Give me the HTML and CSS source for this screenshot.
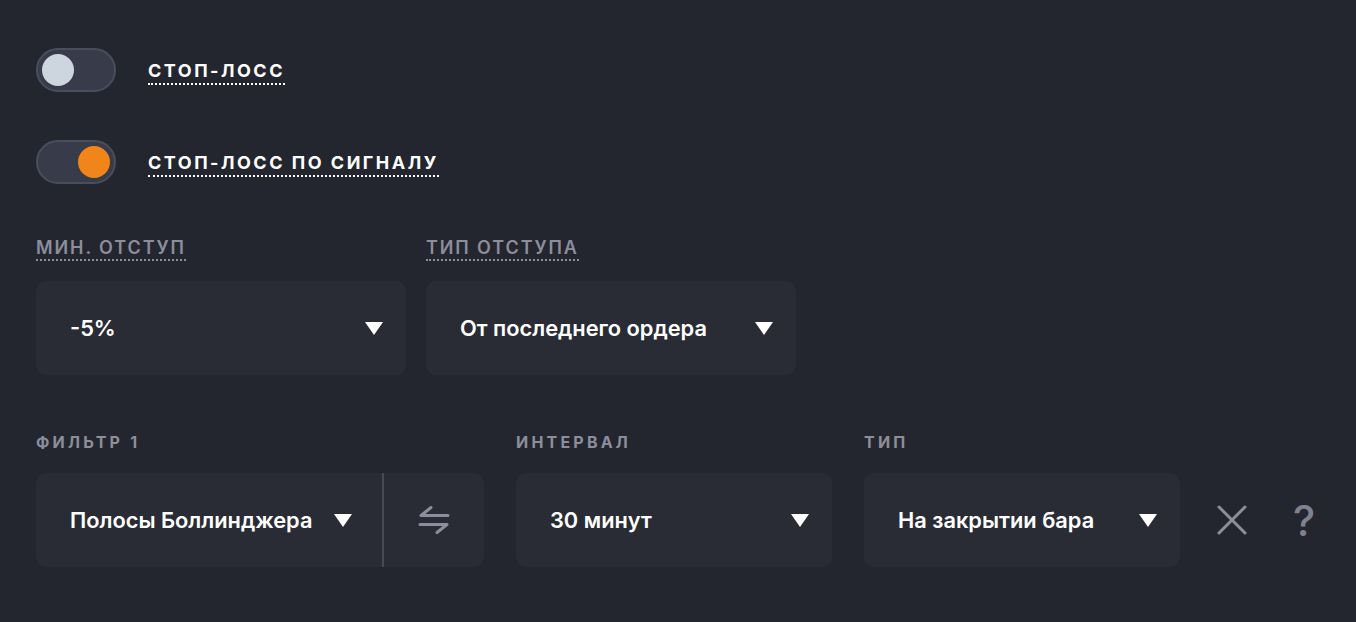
FILE: index.html
```html
<!DOCTYPE html>
<html lang="ru">
<head>
  <meta charset="UTF-8" />
  <meta name="viewport" content="width=device-width, initial-scale=1" />
  <title>Стоп-лосс</title>
  <link rel="stylesheet" href="styles.css">
</head>
<body>
<div id="settings">
  <div class="switch-row">
    <span class="switch"><span class="knob"></span></span>
    <span class="switch-label">Стоп-лосс</span>
  </div>
  <div class="switch-row">
    <span class="switch on"><span class="knob"></span></span>
    <span class="switch-label">Стоп-лосс по сигналу</span>
  </div>

  <div class="fields offset">
    <div class="field">
      <span class="field-label hint">Мин. отступ</span>
      <div class="select"><span>-5%</span><i class="caret"></i></div>
    </div>
    <div class="field">
      <span class="field-label hint">Тип отступа</span>
      <div class="select"><span>От последнего ордера</span><i class="caret"></i></div>
    </div>
  </div>

  <div class="fields filter">
    <div class="field">
      <span class="field-label">Фильтр 1</span>
      <div class="select split">
        <div class="select-main"><span>Полосы Боллинджера</span><i class="caret"></i></div>
        <button class="swap">
          <svg width="32" height="32" viewBox="0 0 32 32" fill="none" stroke="currentColor" stroke-width="3" stroke-linecap="round" stroke-linejoin="round">
            <path d="M3 11.5h27M3 11.5l10-8"/>
            <path d="M2 20.5h27M29 20.5l-10 8"/>
          </svg>
        </button>
      </div>
    </div>
    <div class="field">
      <span class="field-label">Интервал</span>
      <div class="select"><span>30 минут</span><i class="caret"></i></div>
    </div>
    <div class="field">
      <span class="field-label">Тип</span>
      <div class="select"><span>На закрытии бара</span><i class="caret"></i></div>
    </div>
    <div class="actions">
      <button class="icon-btn">
        <svg width="30" height="30" viewBox="0 0 30 30" fill="none" stroke="currentColor" stroke-width="3" stroke-linecap="round">
          <path d="M2 2l26 26M28 2L2 28"/>
        </svg>
      </button>
      <button class="icon-btn help">?</button>
    </div>
  </div>
</div>
</body>
</html>
```

FILE: styles.css
```css
* { margin: 0; padding: 0; box-sizing: border-box; }
html, body {
  height: 100%; overflow: hidden;
  font-family: Inter, 'Liberation Sans', sans-serif;
  background: #24262f; color: #fff;
}

#settings {
  padding: 48px 36px;
  display: flex;
  flex-direction: column;
}

/* toggles */
.switch-row {
  display: flex;
  align-items: center;
  gap: 32px;
  height: 44px;
  margin-bottom: 48px;
}

.switch {
  width: 80px; height: 44px;
  border-radius: 22px;
  background: #383b4a;
  border: 2px solid #4a4d5c;
  display: flex;
  align-items: center;
  padding: 0 4px;
}

.knob {
  width: 32px; height: 32px;
  border-radius: 50%;
  background: #cdd6df;
}

.switch.on { justify-content: flex-end; }
.switch.on .knob { background: #f08519; }

.switch-label {
  font-size: 18px;
  font-weight: 700;
  text-transform: uppercase;
  letter-spacing: 2.5px;
  line-height: 20px;
  border-bottom: 2px dotted #fff;
  padding-bottom: 2px;
  margin-top: 5px;
}

/* selects */
.fields {
  display: flex;
  align-items: flex-end;
}
.fields.offset { gap: 20px; margin-top: 6px; }
.fields.filter { gap: 32px; margin-top: 58px; }

.field {
  flex-shrink: 0;
  display: flex;
  flex-direction: column;
  gap: 22px;
  width: 316px;
}
.field:first-child { width: 448px; }
.fields.offset .field { width: 370px; gap: 20px; }

.field-label {
  align-self: flex-start;
  font-size: 16px;
  font-weight: 700;
  text-transform: uppercase;
  letter-spacing: 3.2px;
  line-height: 18px;
  color: #8c8e9b;
}
.field-label.hint {
  font-size: 18px;
  font-weight: 600;
  letter-spacing: 1.9px;
  line-height: 20px;
  border-bottom: 2px dotted #8c8e9b;
  padding-bottom: 1px;
}

.select {
  height: 94px;
  border-radius: 10px;
  background: #2a2c35;
  display: flex;
  align-items: center;
  justify-content: space-between;
  padding: 0 23px 0 34px;
  font-size: 21.8px;
  font-weight: 600;
}

.caret {
  width: 0; height: 0;
  border-left: 9px solid transparent;
  border-right: 9px solid transparent;
  border-top: 13px solid #fff;
}

.select.split { padding: 0; }
.select-main {
  flex: 1;
  height: 100%;
  display: flex;
  align-items: center;
  justify-content: space-between;
  padding: 0 30px 0 34px;
  border-right: 2px solid #474955;
  margin: 1px 0;
}

.swap, .icon-btn {
  background: none;
  border: none;
  color: #8d8e9c;
  display: flex;
  align-items: center;
  justify-content: center;
  font-family: inherit;
  cursor: pointer;
}
.swap { width: 100px; height: 100%; }

.actions {
  flex-shrink: 0;
  display: flex;
  align-items: center;
  height: 94px;
  gap: 28px;
  margin-left: -2px;
}
.icon-btn { width: 44px; height: 44px; }
.icon-btn.help {
  font-size: 42px;
  font-weight: 500;
  color: #7f8092;
}
```
